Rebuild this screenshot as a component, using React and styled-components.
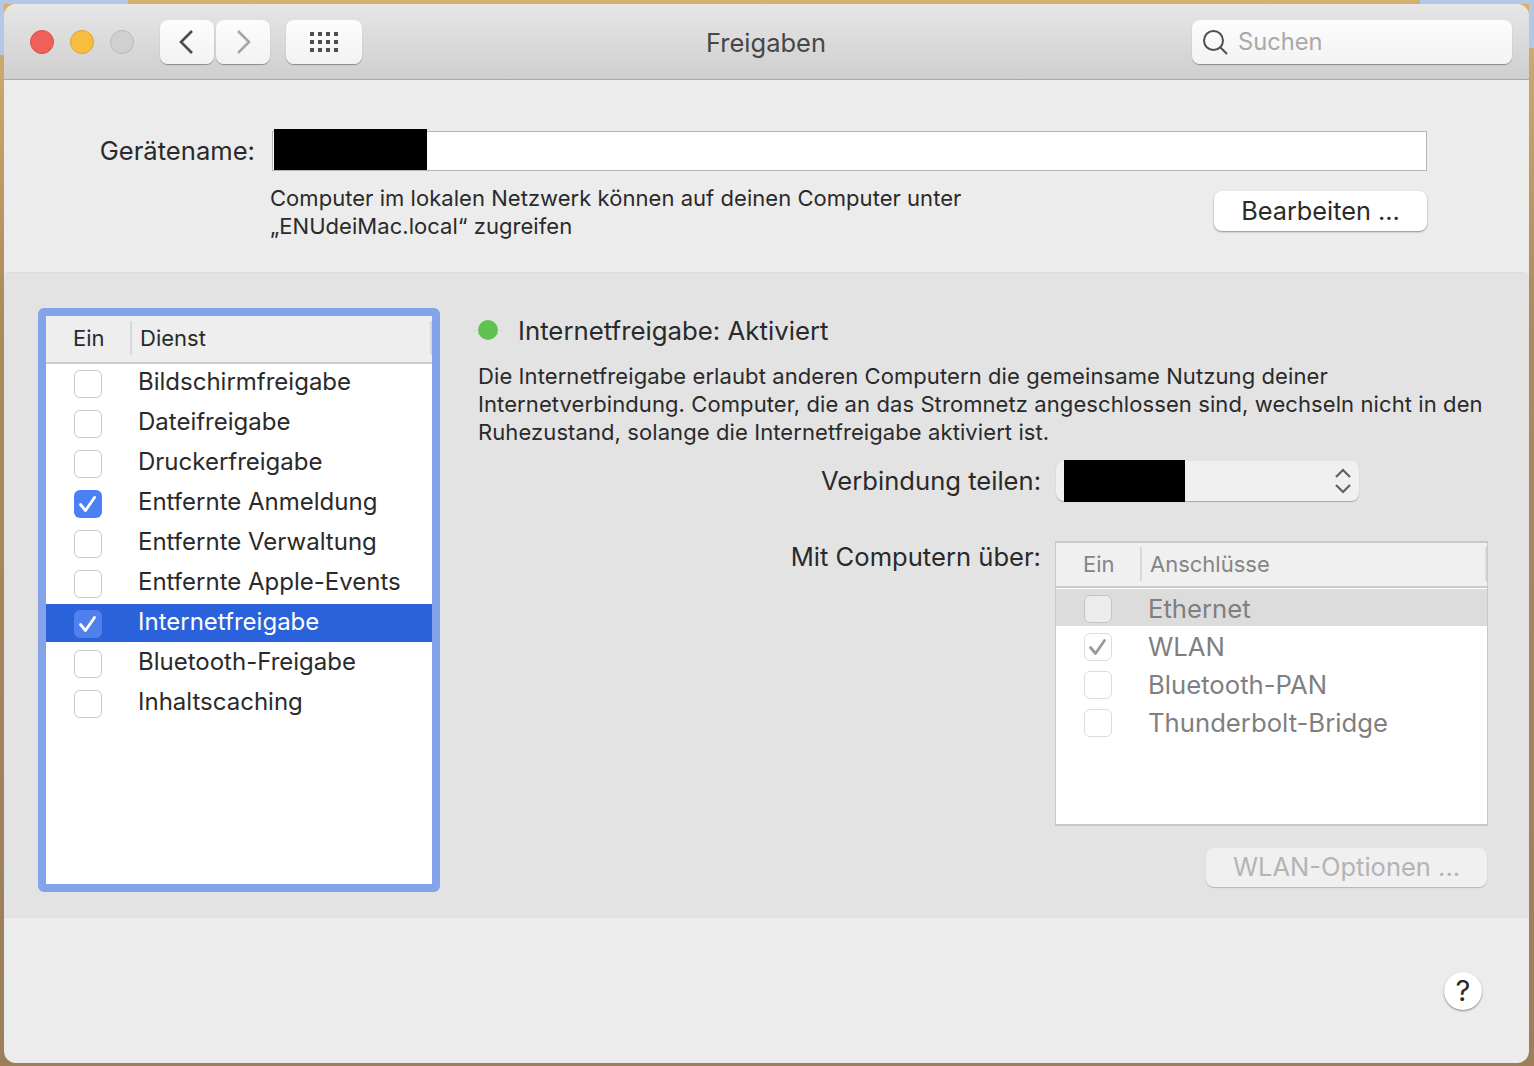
import React from "react";
import styled, { createGlobalStyle } from "styled-components";

const services = [
  { name: "Bildschirmfreigabe" },
  { name: "Dateifreigabe" },
  { name: "Druckerfreigabe" },
  { name: "Entfernte Anmeldung", on: true },
  { name: "Entfernte Verwaltung" },
  { name: "Entfernte Apple-Events" },
  { name: "Internetfreigabe", on: true, selected: true },
  { name: "Bluetooth-Freigabe" },
  { name: "Inhaltscaching" },
];

const ports = [
  { name: "Ethernet", selected: true },
  { name: "WLAN", on: true },
  { name: "Bluetooth-PAN" },
  { name: "Thunderbolt-Bridge" },
];

const Check = ({ color }) => (
  <svg width="20" height="20" viewBox="0 0 20 20" fill="none">
    <path d="M2.5 10.5 L7.5 16.5 L16.5 3.5" stroke={color} strokeWidth="2.8" strokeLinecap="round" strokeLinejoin="round" />
  </svg>
);

const App = () => {
  return (
    <>
      <GlobalStyle />
      <Desktop>
        <Window>
          <TitleBar>
            <Lights>
              <Light $bg="#f0605a" $line="#dc4c47" />
              <Light $bg="#f7bd3e" $line="#dfa32e" />
              <Light $bg="#d0d0d0" $line="#b9b9b9" />
            </Lights>
            <NavButton $width={54}>
              <svg width="20" height="26" viewBox="0 0 20 26" fill="none">
                <path d="M15 2 L4 13 L15 24" stroke="#4c4c4c" strokeWidth="2.6" />
              </svg>
            </NavButton>
            <NavButton $width={54} $gap={2}>
              <svg width="20" height="26" viewBox="0 0 20 26" fill="none">
                <path d="M5 2 L16 13 L5 24" stroke="#a6a6a6" strokeWidth="2.6" />
              </svg>
            </NavButton>
            <NavButton $width={76} $gap={16}>
              <GridDots>
                {Array.from({ length: 12 }).map((_, i) => (
                  <i key={i} />
                ))}
              </GridDots>
            </NavButton>
            <Title>Freigaben</Title>
            <SearchBox>
              <svg width="28" height="28" viewBox="0 0 28 28" fill="none">
                <circle cx="12.5" cy="12.5" r="9.5" stroke="#4f4f4f" strokeWidth="2" />
                <path d="M19.5 19.5 L26 26" stroke="#4f4f4f" strokeWidth="2" />
              </svg>
              <span>Suchen</span>
            </SearchBox>
          </TitleBar>

          <DeviceSection>
            <NameRow>
              <NameLabel>Gerätename:</NameLabel>
              <NameInput>
                <Redacted $left={1} $top={-3} $width={153} $height={41} />
              </NameInput>
            </NameRow>
            <InfoRow>
              <InfoText>
                Computer im lokalen Netzwerk können auf deinen Computer unter
                <br />
                „ENUdeiMac.local“ zugreifen
              </InfoText>
              <PushButton>Bearbeiten ...</PushButton>
            </InfoRow>
          </DeviceSection>

          <Panel>
            <ServiceFocus>
              <ServiceList>
                <TableHead>
                  <HeadOn>Ein</HeadOn>
                  <HeadName>Dienst</HeadName>
                </TableHead>
                {services.map((service) => (
                  <ServiceRow key={service.name} $selected={service.selected}>
                    <Box $on={service.on} $selected={service.selected}>
                      {service.on && <Check color="#fff" />}
                    </Box>
                    <span>{service.name}</span>
                  </ServiceRow>
                ))}
              </ServiceList>
            </ServiceFocus>

            <Detail>
              <StatusRow>
                <StatusDot />
                <span>Internetfreigabe: Aktiviert</span>
              </StatusRow>
              <Description>
                Die Internetfreigabe erlaubt anderen Computern die gemeinsame Nutzung deiner
                <br />
                Internetverbindung. Computer, die an das Stromnetz angeschlossen sind, wechseln nicht in den
                <br />
                Ruhezustand, solange die Internetfreigabe aktiviert ist.
              </Description>
              <ShareRow>
                <FieldLabel>Verbindung teilen:</FieldLabel>
                <SelectBox>
                  <Redacted $left={8} $top={-1} $width={121} $height={42} />
                  <svg width="20" height="30" viewBox="0 0 20 30" fill="none">
                    <path d="M3 11 L10 4 L17 11 M3 19 L10 26 L17 19" stroke="#606060" strokeWidth="2.2" />
                  </svg>
                </SelectBox>
              </ShareRow>
              <PortsRow>
                <FieldLabel>Mit Computern über:</FieldLabel>
                <PortsTable>
                  <PortsHead>
                    <HeadOn $muted>Ein</HeadOn>
                    <HeadName $muted>Anschlüsse</HeadName>
                  </PortsHead>
                  {ports.map((port) => (
                    <PortRow key={port.name} $selected={port.selected}>
                      <Box $faint $selected={port.selected}>
                        {port.on && <Check color="#9a9a9a" />}
                      </Box>
                      <span>{port.name}</span>
                    </PortRow>
                  ))}
                </PortsTable>
              </PortsRow>
              <OptionsRow>
                <DisabledButton>WLAN-Optionen ...</DisabledButton>
              </OptionsRow>
            </Detail>
          </Panel>

          <Footer>
            <HelpButton>?</HelpButton>
          </Footer>
        </Window>
      </Desktop>
    </>
  );
};

const GlobalStyle = createGlobalStyle`
  html, body {
    margin: 0;
    padding: 0;
    overflow: hidden;
  }

  body {
    font-family: Inter, "Noto Sans", sans-serif;
    -webkit-font-smoothing: antialiased;
  }
`;

const Desktop = styled.div`
  width: 1534px;
  height: 1066px;
  padding: 4px 5px 3px 4px;
  box-sizing: border-box;
  background:
    linear-gradient(90deg, #b3c8e6 0, #b3c8e6 128px, transparent 128px, transparent 1420px, #b3c8e6 1420px) top / 100% 4px no-repeat,
    linear-gradient(180deg, #b3c8e6 0, #b3c8e6 55px, transparent 55px) left / 4px 100% no-repeat,
    linear-gradient(180deg, #b3c8e6 0, #b3c8e6 48px, transparent 48px) right / 5px 100% no-repeat,
    linear-gradient(180deg, #d2b06e 0, #ab8a5c 30%, #9c7e58 100%);
`;

const Window = styled.div`
  width: 100%;
  height: 100%;
  display: flex;
  flex-direction: column;
  background: #ececec;
  border-radius: 12px;
  overflow: hidden;
  color: #2a2a2a;
`;

const TitleBar = styled.div`
  height: 76px;
  flex-shrink: 0;
  box-sizing: border-box;
  padding: 16px 17px 0 26px;
  display: flex;
  align-items: flex-start;
  background: linear-gradient(180deg, #e6e6e6, #cfcfcf);
  border-bottom: 1px solid #aaaaaa;
`;

const Lights = styled.div`
  display: flex;
  gap: 16px;
  margin: 10px 26px 0 0;
`;

const Light = styled.div`
  width: 24px;
  height: 24px;
  box-sizing: border-box;
  border-radius: 50%;
  background: ${({ $bg }) => $bg};
  border: 1px solid ${({ $line }) => $line};
`;

const NavButton = styled.div`
  width: ${({ $width }) => $width}px;
  height: 44px;
  margin-left: ${({ $gap }) => $gap || 0}px;
  box-sizing: border-box;
  border-radius: 8px;
  display: flex;
  align-items: center;
  justify-content: center;
  background: linear-gradient(180deg, #fdfdfd, #f2f2f2);
  box-shadow: 0 1px 1px rgba(0, 0, 0, 0.35);
`;

const GridDots = styled.div`
  display: grid;
  grid-template-columns: repeat(4, 4px);
  grid-auto-rows: 4px;
  gap: 4px 4px;

  > i {
    background: #4f4f4f;
  }
`;

const Title = styled.div`
  flex: 1;
  text-align: center;
  font-size: 25.5px;
  line-height: 46px;
  color: #474747;
  padding-right: 22px;
`;

const SearchBox = styled.div`
  width: 320px;
  height: 44px;
  box-sizing: border-box;
  padding: 0 0 0 9px;
  display: flex;
  align-items: center;
  gap: 9px;
  border-radius: 8px;
  background: linear-gradient(180deg, #fdfdfd, #f3f3f3);
  box-shadow: 0 1px 1px rgba(0, 0, 0, 0.35);
  font-size: 23.7px;
  color: #a9a9a9;

  > span {
    margin-bottom: 2px;
  }
`;

const DeviceSection = styled.div`
  height: 192px;
  flex-shrink: 0;
  box-sizing: border-box;
  padding: 51px 102px 0 0;
`;

const NameRow = styled.div`
  display: flex;
  align-items: center;
`;

const NameLabel = styled.div`
  width: 251px;
  text-align: right;
  font-size: 25.6px;
  margin: 0 17px 2px 0;
`;

const NameInput = styled.div`
  position: relative;
  flex: 1;
  height: 40px;
  box-sizing: border-box;
  background: #fff;
  border: 1px solid #b4b4b4;
`;

const Redacted = styled.div`
  position: absolute;
  left: ${({ $left }) => $left}px;
  top: ${({ $top }) => $top}px;
  width: ${({ $width }) => $width}px;
  height: ${({ $height }) => $height}px;
  background: #000;
`;

const InfoRow = styled.div`
  display: flex;
  justify-content: space-between;
  align-items: flex-start;
  padding-left: 266px;
  margin-top: 20px;
`;

const InfoText = styled.div`
  font-size: 22px;
  line-height: 28px;
  letter-spacing: 0.04px;
  margin-top: -7px;
`;

const PushButton = styled.div`
  width: 213px;
  height: 40px;
  border-radius: 8px;
  text-align: center;
  font-size: 25.3px;
  line-height: 40px;
  background: #fff;
  box-shadow: 0 1px 2px rgba(0, 0, 0, 0.4);
`;

const Panel = styled.div`
  height: 646px;
  flex-shrink: 0;
  box-sizing: border-box;
  padding: 35px 41px 0 34px;
  display: flex;
  gap: 38px;
  background: #e3e3e3;
  border-top: 1px solid #dcdcdc;
  border-bottom: 1px solid #dedede;
  border-radius: 6px 6px 0 0;
`;

const ServiceFocus = styled.div`
  width: 402px;
  height: 584px;
  flex-shrink: 0;
  box-sizing: border-box;
  border: 8px solid #85a3e8;
  border-radius: 6px;
`;

const ServiceList = styled.div`
  height: 100%;
  background: #fff;
  font-size: 24px;
`;

const TableHead = styled.div`
  height: 48px;
  box-sizing: border-box;
  padding-bottom: 2px;
  display: flex;
  align-items: center;
  background: #eeeeee;
  border-bottom: 2px solid #cbcbcb;
  font-size: 22px;
`;

const HeadOn = styled.div`
  width: 86px;
  box-sizing: border-box;
  padding-left: 27px;
  height: 34px;
  line-height: 34px;
  border-right: 2px solid #d8d8d8;
  color: ${({ $muted }) => ($muted ? "#858585" : "#2a2a2a")};
`;

const HeadName = styled.div`
  flex: 1;
  padding-left: 8px;
  height: 34px;
  line-height: 34px;
  color: ${({ $muted }) => ($muted ? "#858585" : "#2a2a2a")};
  border-right: 2px solid #d8d8d8;
`;

const ServiceRow = styled.div`
  height: 38px;
  margin-bottom: 2px;
  display: flex;
  align-items: center;
  padding-left: 28px;
  gap: 36px;
  background: ${({ $selected }) => ($selected ? "#2a62db" : "transparent")};
  color: ${({ $selected }) => ($selected ? "#fff" : "#2a2a2a")};

  > span {
    margin-bottom: 4px;
  }
`;

const Box = styled.div`
  width: 28px;
  height: 28px;
  margin-top: ${({ $faint }) => ($faint ? 0 : 2)}px;
  box-sizing: border-box;
  flex-shrink: 0;
  border-radius: 6px;
  display: flex;
  align-items: center;
  justify-content: center;
  background: ${({ $on, $selected, $faint }) =>
    $faint ? ($selected ? "#ececec" : "#fff") : $on ? ($selected ? "#4f80ec" : "#4a80f0") : "#fff"};
  border: 1px solid
    ${({ $on, $faint, $selected }) =>
      $faint ? ($selected ? "#c4c4c4" : "#dcdcdc") : $on ? "transparent" : "#c8c8c8"};
`;

const Detail = styled.div`
  flex: 1;
  min-width: 0;
`;

const StatusRow = styled.div`
  display: flex;
  align-items: center;
  gap: 20px;
  height: 44px;
  font-size: 25.8px;
`;

const StatusDot = styled.div`
  width: 20px;
  height: 20px;
  border-radius: 50%;
  background: #5fc14f;
`;

const Description = styled.div`
  font-size: 22px;
  line-height: 28px;
  letter-spacing: 0.09px;
  margin-top: 10px;
`;

const ShareRow = styled.div`
  display: flex;
  align-items: center;
  margin-top: 15px;
`;

const FieldLabel = styled.div`
  width: 563px;
  flex-shrink: 0;
  text-align: right;
  font-size: 25.6px;
  line-height: 32px;
`;

const SelectBox = styled.div`
  position: relative;
  width: 303px;
  height: 40px;
  margin-left: 15px;
  box-sizing: border-box;
  padding-right: 6px;
  display: flex;
  align-items: center;
  justify-content: flex-end;
  border-radius: 8px;
  background: #f0f0f0;
  box-shadow: 0 1px 1px rgba(0, 0, 0, 0.25);
`;

const PortsRow = styled.div`
  display: flex;
  align-items: flex-start;
  margin-top: 40px;
`;

const PortsTable = styled.div`
  width: 433px;
  height: 285px;
  margin-left: 14px;
  box-sizing: border-box;
  background: #fff;
  border: 2px solid #c8c8c8;
  border-width: 2px 1px;
  font-size: 25.7px;
  color: #7f7f7f;
`;

const PortsHead = styled(TableHead)`
  height: 45px;
  background: #f0f0f0;
  margin-bottom: 1px;
`;

const PortRow = styled.div`
  height: 38px;
  box-sizing: border-box;
  padding: 2px 0 0 28px;
  display: flex;
  align-items: center;
  gap: 36px;
  background: ${({ $selected }) =>
    $selected ? "linear-gradient(#dcdcdc, #dcdcdc) top / 100% 37px no-repeat" : "transparent"};

  > span {
    margin-bottom: 2px;
  }
`;

const OptionsRow = styled.div`
  display: flex;
  justify-content: flex-end;
  margin: 22px 1px 0 0;
`;

const DisabledButton = styled.div`
  width: 281px;
  height: 39px;
  border-radius: 8px;
  text-align: center;
  font-size: 25.5px;
  line-height: 37px;
  color: #b4b4b4;
  background: #f0f0f0;
  box-shadow: 0 1px 1px rgba(0, 0, 0, 0.2);
`;

const Footer = styled.div`
  flex: 1;
  display: flex;
  justify-content: flex-end;
  align-items: flex-start;
  padding: 54px 47px 0 0;
`;

const HelpButton = styled.div`
  width: 38px;
  height: 38px;
  border-radius: 50%;
  background: #fff;
  box-shadow: 0 1px 2px rgba(0, 0, 0, 0.45);
  text-align: center;
  font-size: 29px;
  line-height: 38px;
  color: #2a2a2a;
`;

export default App;
